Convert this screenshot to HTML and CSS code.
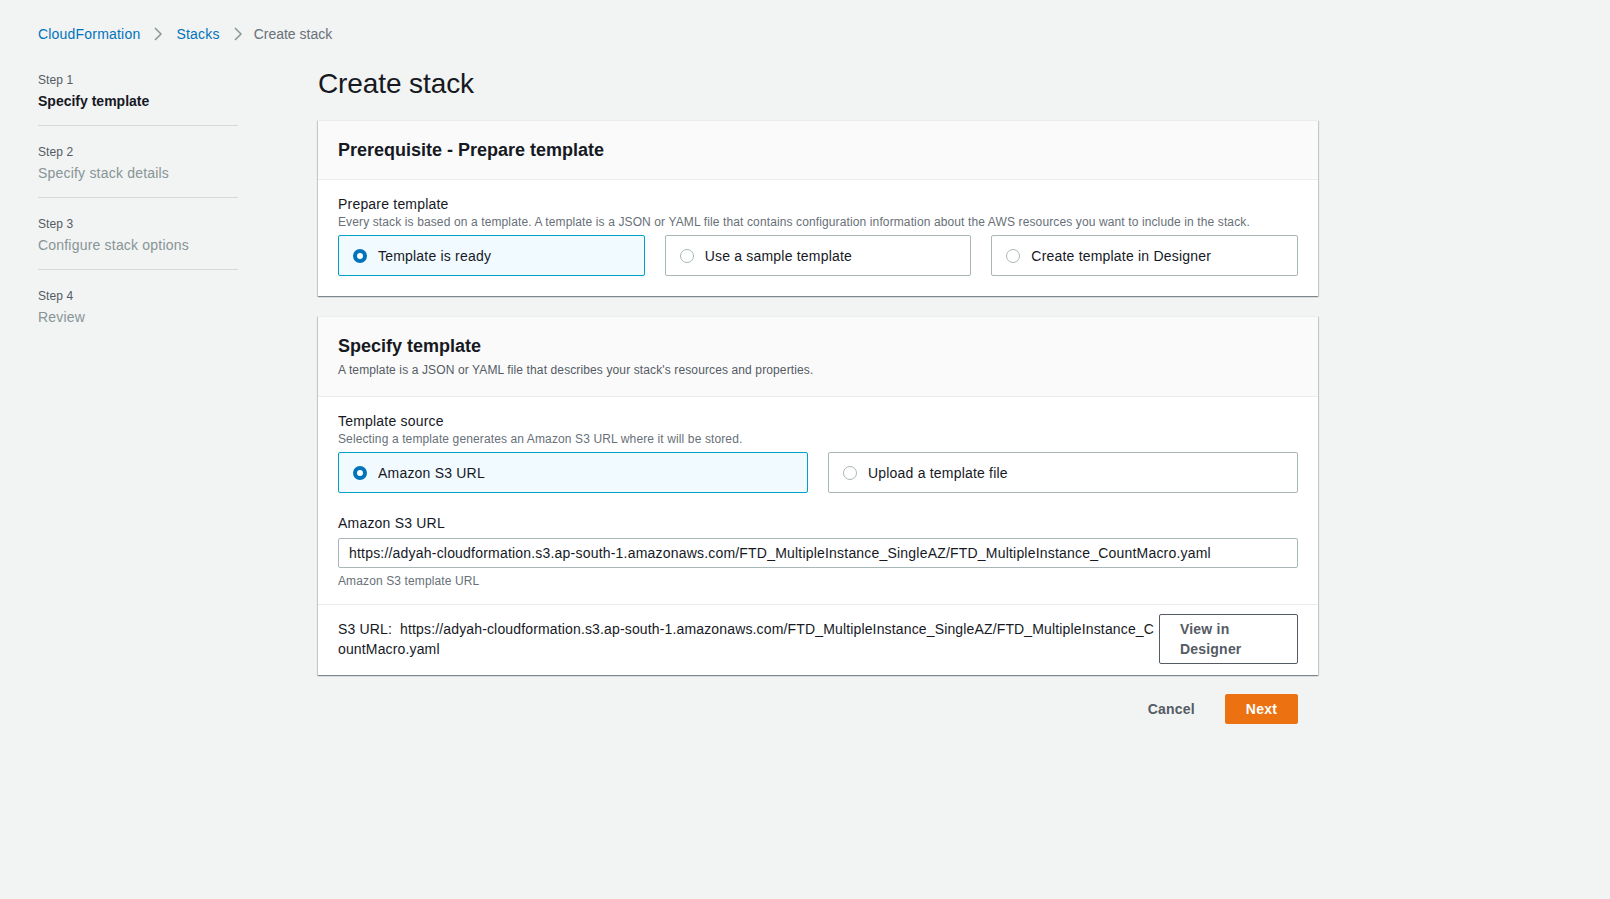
FILE: index.html
```html
<!DOCTYPE html>
<html lang="en">
<head>
<meta charset="utf-8">
<title>Create stack</title>
<link rel="stylesheet" href="styles.css">
</head>
<body>
<div class="page">
  <nav class="breadcrumb">
    <a class="crumb-link" href="#">CloudFormation</a>
    <svg class="chev" width="8" height="14" viewBox="0 0 8 14"><path d="M1 1l6 6-6 6" fill="none" stroke="#879596" stroke-width="1.5"/></svg>
    <a class="crumb-link" href="#">Stacks</a>
    <svg class="chev" width="8" height="14" viewBox="0 0 8 14"><path d="M1 1l6 6-6 6" fill="none" stroke="#879596" stroke-width="1.5"/></svg>
    <span class="crumb-current">Create stack</span>
  </nav>

  <div class="layout">
    <aside class="steps">
      <div class="step">
        <div class="step-num">Step 1</div>
        <div class="step-name active">Specify template</div>
      </div>
      <div class="step">
        <div class="step-num">Step 2</div>
        <div class="step-name">Specify stack details</div>
      </div>
      <div class="step">
        <div class="step-num">Step 3</div>
        <div class="step-name">Configure stack options</div>
      </div>
      <div class="step last">
        <div class="step-num">Step 4</div>
        <div class="step-name">Review</div>
      </div>
    </aside>

    <main class="main">
      <h1 class="title">Create stack</h1>

      <section class="card">
        <div class="card-header">
          <h2 class="card-title">Prerequisite - Prepare template</h2>
        </div>
        <div class="card-body">
          <div class="field-label">Prepare template</div>
          <div class="field-desc">Every stack is based on a template. A template is a JSON or YAML file that contains configuration information about the AWS resources you want to include in the stack.</div>
          <div class="tiles three">
            <div class="tile selected"><span class="radio on"></span><span>Template is ready</span></div>
            <div class="tile"><span class="radio"></span><span>Use a sample template</span></div>
            <div class="tile"><span class="radio"></span><span>Create template in Designer</span></div>
          </div>
        </div>
      </section>

      <section class="card">
        <div class="card-header">
          <h2 class="card-title">Specify template</h2>
          <div class="card-desc">A template is a JSON or YAML file that describes your stack's resources and properties.</div>
        </div>
        <div class="card-body tight">
          <div class="field-label">Template source</div>
          <div class="field-desc">Selecting a template generates an Amazon S3 URL where it will be stored.</div>
          <div class="tiles two">
            <div class="tile selected"><span class="radio on"></span><span>Amazon S3 URL</span></div>
            <div class="tile"><span class="radio"></span><span>Upload a template file</span></div>
          </div>

          <div class="field-label spaced">Amazon S3 URL</div>
          <div class="input">https://adyah-cloudformation.s3.ap-south-1.amazonaws.com/FTD_MultipleInstance_SingleAZ/FTD_MultipleInstance_CountMacro.yaml</div>
          <div class="field-hint">Amazon S3 template URL</div>
        </div>
        <div class="card-footer">
          <div class="s3-url">S3 URL:&nbsp; https://adyah-cloudformation.s3.ap-south-1.amazonaws.com/FTD_MultipleInstance_SingleAZ/FTD_MultipleInstance_CountMacro.yaml</div>
          <button class="btn-outline">View in Designer</button>
        </div>
      </section>

      <div class="actions">
        <button class="btn-link">Cancel</button>
        <button class="btn-primary">Next</button>
      </div>
    </main>
  </div>
</div>
</body>
</html>
```

FILE: styles.css
```css
* { box-sizing: border-box; }

html, body {
  margin: 0;
  padding: 0;
  background: #f2f3f3;
}

body {
  font-family: "Liberation Sans", Arial, sans-serif;
  font-size: 14px;
  line-height: 20px;
  letter-spacing: 0.2px;
  color: #16191f;
}

.page {
  padding: 24px 38px 40px 38px;
}

.breadcrumb {
  display: flex;
  align-items: center;
  gap: 14px;
  height: 20px;
}

.crumb-link {
  color: #0073bb;
  text-decoration: none;
}

.crumb-current {
  color: #687078;
  margin-left: -2px;
  letter-spacing: 0;
}

.chev { display: block; }

.layout {
  display: grid;
  grid-template-columns: 200px 1000px;
  column-gap: 80px;
  margin-top: 10px;
}

.step {
  padding: 18px 0 14px 0;
  border-bottom: 1px solid #d5dbdb;
}

.step.last { border-bottom: none; }

.step-num {
  font-size: 12px;
  line-height: 16px;
  letter-spacing: 0.12px;
  color: #545b64;
}

.step-name {
  margin-top: 3px;
  color: #879596;
}

.step-name.active {
  color: #16191f;
  font-weight: bold;
  letter-spacing: 0;
}

.title {
  margin: 12px 0 18px 0;
  font-size: 28px;
  line-height: 36px;
  font-weight: normal;
  letter-spacing: -0.1px;
  color: #16191f;
}

.card {
  background: #fff;
  border-top: 1px solid #eaeded;
  box-shadow: 0 1px 1px 0 rgba(0, 28, 36, 0.3), 1px 1px 1px 0 rgba(0, 28, 36, 0.15), -1px 1px 1px 0 rgba(0, 28, 36, 0.15);
  margin-bottom: 20px;
}

.card-header {
  background: #fafafa;
  border-bottom: 1px solid #eaeded;
  padding: 18px 20px 18px 20px;
}

.card-title {
  margin: 0;
  font-size: 18px;
  line-height: 22px;
  font-weight: bold;
  letter-spacing: 0;
}

.card-desc {
  font-size: 12px;
  line-height: 16px;
  letter-spacing: 0.12px;
  color: #545b64;
  margin-top: 5px;
}

.card-body {
  padding: 14px 20px 20px 20px;
}

.card-body.tight {
  padding-bottom: 15px;
}

.field-label {
  color: #16191f;
}

.field-label.spaced {
  margin-top: 20px;
}

.field-desc {
  font-size: 12px;
  line-height: 16px;
  letter-spacing: 0.12px;
  color: #687078;
}

.tiles {
  display: grid;
  column-gap: 20px;
  margin-top: 5px;
}

.tiles.three { grid-template-columns: repeat(3, 1fr); }
.tiles.two { grid-template-columns: repeat(2, 1fr); }

.tile {
  display: flex;
  align-items: center;
  gap: 11px;
  height: 41px;
  padding: 0 14px;
  border: 1px solid #aab7b8;
  border-radius: 2px;
  background: #fff;
}

.tile.selected {
  background: #f1faff;
  border-color: #00a1c9;
}

.radio {
  flex: none;
  width: 14px;
  height: 14px;
  border-radius: 50%;
  border: 1px solid #aab7b8;
  background: #fff;
}

.radio.on {
  border: 4px solid #0073bb;
}

.input {
  margin-top: 5px;
  height: 30px;
  padding: 4px 10px;
  border: 1px solid #aab7b8;
  border-radius: 2px;
  background: #fff;
  white-space: nowrap;
  overflow: hidden;
}

.field-hint {
  margin-top: 5px;
  font-size: 12px;
  line-height: 16px;
  letter-spacing: 0.12px;
  color: #687078;
}

.card-footer {
  display: flex;
  align-items: center;
  border-top: 1px solid #eaeded;
  padding: 9px 20px 11px 20px;
}

.s3-url {
  flex: 1;
  min-width: 0;
  word-break: break-all;
  letter-spacing: 0.15px;
}

.btn-outline {
  flex: none;
  width: 139px;
  padding: 4px 20px;
  border: 1px solid #545b64;
  border-radius: 2px;
  background: #fff;
  color: #545b64;
  font-family: inherit;
  font-size: 14px;
  line-height: 20px;
  font-weight: bold;
  letter-spacing: 0.2px;
  text-align: left;
}

.actions {
  display: flex;
  justify-content: flex-end;
  align-items: center;
  gap: 10px;
  padding-right: 20px;
  margin-top: -1px;
}

.btn-link {
  border: none;
  background: transparent;
  color: #545b64;
  font-family: inherit;
  font-size: 14px;
  font-weight: bold;
  line-height: 20px;
  letter-spacing: 0.2px;
  padding: 5px 20px;
}

.btn-primary {
  border: 1px solid #ec7211;
  background: #ec7211;
  color: #fff;
  border-radius: 2px;
  font-family: inherit;
  font-size: 14px;
  font-weight: bold;
  line-height: 20px;
  letter-spacing: 0.2px;
  padding: 4px 20px;
  height: 30px;
}
```
